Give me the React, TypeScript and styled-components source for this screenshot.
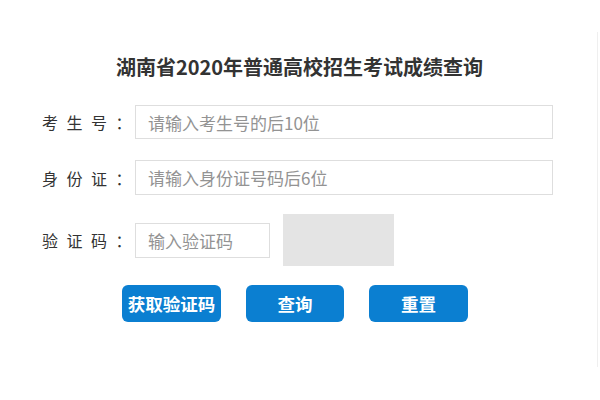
import React from "react";
import styled, { createGlobalStyle } from "styled-components";

const Global = createGlobalStyle`
  html, body {
    margin: 0;
    padding: 0;
    background: #ffffff;
  }
  body {
    width: 600px;
    height: 400px;
    overflow: hidden;
    font-family: "Noto Sans CJK SC", "Noto Sans", sans-serif;
  }
  * { box-sizing: border-box; }
`;

const Page = styled.div`
  width: 600px;
  height: 400px;
  padding-top: 32px;
`;

const Panel = styled.div`
  width: 598px;
  height: 335px;
  border-right: 1px solid #efefef;
  padding-top: 20px;
  display: flex;
  flex-direction: column;
`;

const Title = styled.h1`
  margin: 0 0 23px 0;
  height: 30px;
  line-height: 30px;
  font-size: 20px;
  font-weight: 700;
  color: #333333;
  text-align: center;
  padding-left: 2px;
`;

const Form = styled.div`
  display: flex;
  flex-direction: column;
`;

const Row = styled.div<{ $gap: number }>`
  display: flex;
  align-items: center;
  margin-bottom: ${(p) => p.$gap}px;
`;

const Label = styled.label`
  width: 135px;
  padding-left: 42px;
  font-size: 16px;
  letter-spacing: 8.5px;
  color: #333333;
  white-space: nowrap;
`;

const Input = styled.input<{ $w: number; $h: number }>`
  width: ${(p) => p.$w}px;
  height: ${(p) => p.$h}px;
  border: 1px solid #dedede;
  padding: 0 0 0 12px;
  font-family: "Noto Sans CJK SC", "Noto Sans", sans-serif;
  font-size: 17px;
  color: #333;
  outline: none;
  background: #fff;
  &::placeholder {
    color: #939393;
  }
`;

const Captcha = styled.div`
  width: 111px;
  height: 52px;
  margin-left: 13px;
  background: #e4e4e4;
`;

const Buttons = styled.div`
  display: flex;
  gap: 25px;
  padding-left: 122px;
`;

const Button = styled.button<{ $w: number }>`
  width: ${(p) => p.$w}px;
  height: 37px;
  border: none;
  border-radius: 6px;
  background: #0b7fd1;
  color: #ffffff;
  font-family: "Noto Sans CJK SC", "Noto Sans", sans-serif;
  font-size: 17.5px;
  font-weight: 700;
  padding: 0;
  cursor: pointer;
`;

export default function App() {
  return (
    <>
      <Global />
      <Page>
        <Panel>
          <Title>湖南省2020年普通高校招生考试成绩查询</Title>
          <Form>
            <Row $gap={21}>
              <Label>考生号：</Label>
              <Input $w={418} $h={34} placeholder="请输入考生号的后10位" />
            </Row>
            <Row $gap={19}>
              <Label>身份证：</Label>
              <Input $w={418} $h={35} placeholder="请输入身份证号码后6位" />
            </Row>
            <Row $gap={19}>
              <Label>验证码：</Label>
              <Input $w={135} $h={35} placeholder="输入验证码" />
              <Captcha />
            </Row>
            <Buttons>
              <Button $w={99}>获取验证码</Button>
              <Button $w={98}>查询</Button>
              <Button $w={99}>重置</Button>
            </Buttons>
          </Form>
        </Panel>
      </Page>
    </>
  );
}
